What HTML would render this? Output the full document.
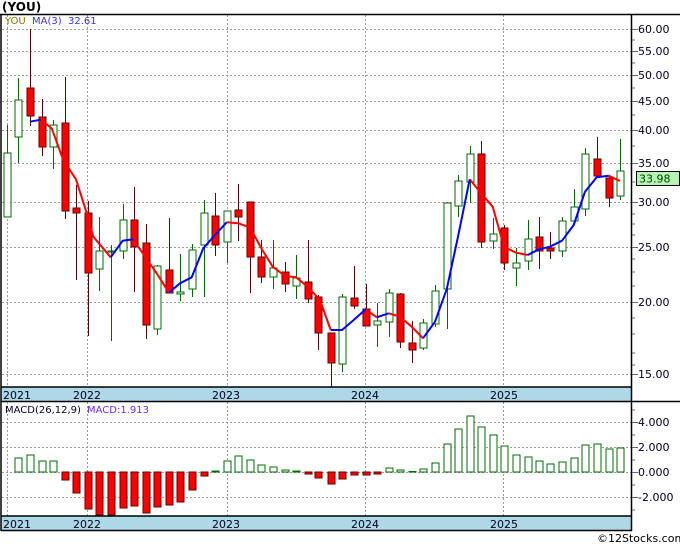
<!DOCTYPE html>
<html><head><meta charset="utf-8"><style>
html,body{margin:0;padding:0;background:#fff;width:680px;height:546px;overflow:hidden}
svg{display:block}
text{font-family:"DejaVu Sans","Liberation Sans",sans-serif;font-size:11px;fill:#000022}
</style></head><body>
<svg width="680" height="546" viewBox="0 0 680 546" xmlns="http://www.w3.org/2000/svg">
<text x="2" y="11" style="font-weight:bold;font-size:12px;fill:#000">(YOU)</text>
<g stroke="#999" stroke-width="1" stroke-dasharray="2,2">
<line x1="2" y1="29.5" x2="632" y2="29.5"/><line x1="2" y1="51.5" x2="632" y2="51.5"/><line x1="2" y1="75.5" x2="632" y2="75.5"/><line x1="2" y1="101.5" x2="632" y2="101.5"/><line x1="2" y1="130.5" x2="632" y2="130.5"/><line x1="2" y1="163.5" x2="632" y2="163.5"/><line x1="2" y1="202.5" x2="632" y2="202.5"/><line x1="2" y1="247.5" x2="632" y2="247.5"/><line x1="2" y1="302.5" x2="632" y2="302.5"/><line x1="2" y1="374.5" x2="632" y2="374.5"/>
<line x1="2" y1="422.5" x2="632" y2="422.5"/><line x1="2" y1="447.5" x2="632" y2="447.5"/><line x1="2" y1="472.5" x2="632" y2="472.5"/><line x1="2" y1="497.5" x2="632" y2="497.5"/>
<line x1="7.5" y1="15" x2="7.5" y2="387"/><line x1="87.5" y1="15" x2="87.5" y2="387"/><line x1="227.5" y1="15" x2="227.5" y2="387"/><line x1="365.5" y1="15" x2="365.5" y2="387"/><line x1="503.5" y1="15" x2="503.5" y2="387"/>
<line x1="7.5" y1="402" x2="7.5" y2="516"/><line x1="87.5" y1="402" x2="87.5" y2="516"/><line x1="227.5" y1="402" x2="227.5" y2="516"/><line x1="365.5" y1="402" x2="365.5" y2="516"/><line x1="503.5" y1="402" x2="503.5" y2="516"/>
</g>
<text x="5" y="24" style="font-size:10px;fill:#808000">YOU</text>
<text x="32" y="24" style="font-size:10px;fill:#3333ff">MA(3)</text>
<text x="68" y="24" style="font-size:10px;fill:#3333ff">32.61</text>
<g stroke-width="1">
<g stroke="#006a00" fill="#fff">
<line x1="7.5" y1="125" x2="7.5" y2="217"/><rect x="4" y="153" width="7" height="64"/>
<line x1="18.5" y1="78" x2="18.5" y2="163"/><rect x="15" y="100" width="7" height="37"/>
<line x1="53.5" y1="120" x2="53.5" y2="169"/><rect x="50" y="125" width="7" height="22"/>
<line x1="99.5" y1="217" x2="99.5" y2="291"/><rect x="96" y="251" width="7" height="18"/>
<line x1="111.5" y1="245" x2="111.5" y2="341"/><rect x="108" y="251" width="7" height="1"/>
<line x1="123.5" y1="204" x2="123.5" y2="259"/><rect x="120" y="220" width="7" height="31"/>
<line x1="157.5" y1="265" x2="157.5" y2="335"/><rect x="154" y="266" width="7" height="63"/>
<line x1="180.5" y1="254" x2="180.5" y2="301"/><rect x="177" y="292" width="7" height="2"/>
<line x1="192.5" y1="244" x2="192.5" y2="297"/><rect x="189" y="250" width="7" height="39"/>
<line x1="204.5" y1="200" x2="204.5" y2="297"/><rect x="201" y="213" width="7" height="32"/>
<line x1="227.5" y1="211" x2="227.5" y2="263"/><rect x="224" y="211" width="7" height="31"/>
<line x1="273.5" y1="240" x2="273.5" y2="289"/><rect x="270" y="268" width="7" height="9"/>
<line x1="296.5" y1="255" x2="296.5" y2="299"/><rect x="293" y="278" width="7" height="8"/>
<line x1="342.5" y1="294" x2="342.5" y2="372"/><rect x="339" y="297" width="7" height="67"/>
<line x1="377.5" y1="303" x2="377.5" y2="347"/><rect x="374" y="321" width="7" height="4"/>
<line x1="389.5" y1="289" x2="389.5" y2="337"/><rect x="386" y="293" width="7" height="29"/>
<line x1="423.5" y1="319" x2="423.5" y2="350"/><rect x="420" y="323" width="7" height="25"/>
<line x1="435.5" y1="285" x2="435.5" y2="327"/><rect x="432" y="291" width="7" height="33"/>
<line x1="447.5" y1="203" x2="447.5" y2="329"/><rect x="444" y="203" width="7" height="86"/>
<line x1="458.5" y1="175" x2="458.5" y2="217"/><rect x="455" y="181" width="7" height="25"/>
<line x1="470.5" y1="146" x2="470.5" y2="203"/><rect x="467" y="154" width="7" height="28"/>
<line x1="493.5" y1="218" x2="493.5" y2="249"/><rect x="490" y="234" width="7" height="7"/>
<line x1="516.5" y1="248" x2="516.5" y2="286"/><rect x="513" y="263" width="7" height="5"/>
<line x1="528.5" y1="220" x2="528.5" y2="270"/><rect x="525" y="239" width="7" height="22"/>
<line x1="562.5" y1="217" x2="562.5" y2="257"/><rect x="559" y="221" width="7" height="30"/>
<line x1="574.5" y1="189" x2="574.5" y2="225"/><rect x="571" y="207" width="7" height="14"/>
<line x1="585.5" y1="148" x2="585.5" y2="216"/><rect x="582" y="154" width="7" height="55"/>
<line x1="620.5" y1="139" x2="620.5" y2="200"/><rect x="617" y="171" width="7" height="25"/>
</g>
<g stroke="#600000" fill="#ff0000">
<line x1="30.5" y1="29" x2="30.5" y2="126"/><rect x="27" y="88" width="7" height="28"/>
<line x1="42.5" y1="99" x2="42.5" y2="156"/><rect x="39" y="117" width="7" height="30"/>
<line x1="65.5" y1="77" x2="65.5" y2="219"/><rect x="62" y="123" width="7" height="88"/>
<line x1="76.5" y1="185" x2="76.5" y2="280"/><rect x="73" y="208" width="7" height="5"/>
<line x1="88.5" y1="201" x2="88.5" y2="336"/><rect x="85" y="213" width="7" height="60"/>
<line x1="134.5" y1="187" x2="134.5" y2="292"/><rect x="131" y="220" width="7" height="27"/>
<line x1="146.5" y1="224" x2="146.5" y2="339"/><rect x="143" y="243" width="7" height="82"/>
<line x1="169.5" y1="218" x2="169.5" y2="293"/><rect x="166" y="270" width="7" height="23"/>
<line x1="215.5" y1="193" x2="215.5" y2="256"/><rect x="212" y="216" width="7" height="29"/>
<line x1="238.5" y1="184" x2="238.5" y2="241"/><rect x="235" y="210" width="7" height="7"/>
<line x1="250.5" y1="202" x2="250.5" y2="293"/><rect x="247" y="202" width="7" height="55"/>
<line x1="261.5" y1="240" x2="261.5" y2="283"/><rect x="258" y="257" width="7" height="20"/>
<line x1="285.5" y1="262" x2="285.5" y2="292"/><rect x="282" y="272" width="7" height="12"/>
<line x1="308.5" y1="240" x2="308.5" y2="303"/><rect x="305" y="282" width="7" height="17"/>
<line x1="318.5" y1="295" x2="318.5" y2="350"/><rect x="315" y="297" width="7" height="36"/>
<line x1="331.5" y1="333" x2="331.5" y2="387"/><rect x="328" y="333" width="7" height="30"/>
<line x1="354.5" y1="266" x2="354.5" y2="309"/><rect x="351" y="298" width="7" height="8"/>
<line x1="366.5" y1="284" x2="366.5" y2="326"/><rect x="363" y="309" width="7" height="17"/>
<line x1="400.5" y1="293" x2="400.5" y2="348"/><rect x="397" y="294" width="7" height="48"/>
<line x1="412.5" y1="321" x2="412.5" y2="363"/><rect x="409" y="343" width="7" height="7"/>
<line x1="481.5" y1="141" x2="481.5" y2="248"/><rect x="478" y="154" width="7" height="88"/>
<line x1="504.5" y1="225" x2="504.5" y2="270"/><rect x="501" y="228" width="7" height="35"/>
<line x1="539.5" y1="217" x2="539.5" y2="269"/><rect x="536" y="237" width="7" height="14"/>
<line x1="550.5" y1="232" x2="550.5" y2="259"/><rect x="547" y="248" width="7" height="3"/>
<line x1="597.5" y1="137" x2="597.5" y2="176"/><rect x="594" y="159" width="7" height="17"/>
<line x1="609.5" y1="177" x2="609.5" y2="207"/><rect x="606" y="178" width="7" height="20"/>
</g>
</g>
<g fill="none" stroke-width="2" stroke-linejoin="round">
<g stroke="#ff0000">
<polyline points="40.7,119.7 51.7,128.3 63.3,160 76,179.3 87.3,215 93.3,236.7 110.7,257.3"/>
<polyline points="133.3,239.3 145,256.7 156.7,273.3 169,292.7"/>
<polyline points="226.7,222.3 238.3,223.3 250,227.3 261.3,248.3 272.7,266.7 285,276 296,277.3 307.7,286.7 320,300 330.7,330"/>
<polyline points="365.7,309.3 376.7,317.3"/>
<polyline points="388.7,313.3 400,316.7 411.7,326.7 423,338.3"/>
<polyline points="469.7,179.3 480.7,192.7 492.7,206.7 504,246.7 516,252.7 527.7,255"/>
<polyline points="608.7,175.7 620,181"/>
</g>
<g stroke="#0000ff">
<polyline points="30,121.7 40.7,119.7"/>
<polyline points="110.7,257.3 122.7,240.7 133.3,239.3"/>
<polyline points="169,292.7 180,283.3 191.7,277.3 203.3,248.3 215,235 226.7,222.3"/>
<polyline points="330.7,330 342,330 353.7,320 365.7,309.3"/>
<polyline points="376.7,317.3 388.7,313.3"/>
<polyline points="423,338.3 435,321.7 446.7,289.3 458,236.7 469.7,179.3"/>
<polyline points="527.7,255 539,249.3 550,246.7 562,240.7 573.7,225 585,191.7 596.7,177.3 608.7,175.7"/>
</g>
</g>
<text x="5" y="413" style="font-size:10px">MACD(26,12,9)</text>
<text x="87" y="413" style="font-size:10px;fill:#6a2cff">MACD:1.913</text>
<g stroke="#006a00" fill="#fff">
<rect x="15" y="458" width="7" height="14"/><rect x="27" y="455" width="7" height="17"/><rect x="39" y="461" width="7" height="11"/><rect x="50" y="461" width="7" height="11"/>
<rect x="212" y="471" width="7" height="1"/><rect x="224" y="461" width="7" height="11"/><rect x="235" y="456" width="7" height="16"/><rect x="247" y="460" width="7" height="12"/><rect x="258" y="465" width="7" height="7"/><rect x="270" y="467" width="7" height="5"/><rect x="282" y="470" width="7" height="2"/><rect x="293" y="471" width="7" height="1"/>
<rect x="386" y="468" width="7" height="4"/><rect x="397" y="470" width="7" height="2"/><rect x="409" y="471.5" width="7" height="0.5"/><rect x="420" y="469" width="7" height="3"/><rect x="432" y="463" width="7" height="9"/><rect x="444" y="444" width="7" height="28"/><rect x="455" y="429" width="7" height="43"/><rect x="467" y="416" width="7" height="56"/><rect x="478" y="427" width="7" height="45"/><rect x="490" y="435" width="7" height="37"/><rect x="501" y="446" width="7" height="26"/><rect x="513" y="455" width="7" height="17"/><rect x="525" y="457" width="7" height="15"/><rect x="536" y="461" width="7" height="11"/><rect x="547" y="464" width="7" height="8"/><rect x="559" y="462" width="7" height="10"/><rect x="571" y="458" width="7" height="14"/><rect x="582" y="445" width="7" height="27"/><rect x="594" y="444" width="7" height="28"/><rect x="606" y="449" width="7" height="23"/><rect x="617" y="448" width="7" height="24"/>
</g>
<g stroke="#600000" fill="#ff0000">
<rect x="62" y="472" width="7" height="8"/><rect x="73" y="472" width="7" height="21"/><rect x="85" y="472" width="7" height="37"/><rect x="96" y="472" width="7" height="43"/><rect x="108" y="472" width="7" height="43"/><rect x="120" y="472" width="7" height="36"/><rect x="131" y="472" width="7" height="34"/><rect x="143" y="472" width="7" height="41"/><rect x="154" y="472" width="7" height="35"/><rect x="166" y="472" width="7" height="33"/><rect x="177" y="472" width="7" height="30"/><rect x="189" y="472" width="7" height="18"/><rect x="201" y="472" width="7" height="4"/>
<rect x="305" y="472" width="7" height="2"/><rect x="315" y="472" width="7" height="6"/><rect x="328" y="472" width="7" height="12"/><rect x="339" y="472" width="7" height="7"/><rect x="351" y="472" width="7" height="3"/><rect x="363" y="472" width="7" height="3"/><rect x="374" y="472" width="7" height="2"/>
</g>
<rect x="1" y="387" width="631" height="14" fill="#add8e6"/>
<rect x="1" y="516" width="631" height="14" fill="#add8e6"/>
<g>
<text x="3" y="399">2021</text><text x="73" y="399">2022</text><text x="212" y="399">2023</text><text x="351" y="399">2024</text><text x="490" y="399">2025</text>
<text x="3" y="528">2021</text><text x="73" y="528">2022</text><text x="212" y="528">2023</text><text x="351" y="528">2024</text><text x="490" y="528">2025</text>
</g>
<g stroke="#000" stroke-width="1.5" fill="none">
<line x1="0" y1="14.5" x2="680" y2="14.5"/>
<line x1="1" y1="14" x2="1" y2="531"/>
<line x1="631.5" y1="14" x2="631.5" y2="531"/>
<line x1="1" y1="387" x2="632" y2="387"/>
<line x1="1" y1="401.5" x2="680" y2="401.5"/>
<line x1="1" y1="516" x2="632" y2="516"/>
<line x1="1" y1="530.5" x2="632" y2="530.5"/>
</g>
<g stroke="#666" stroke-width="1">
<line x1="632" y1="29.5" x2="638" y2="29.5"/><line x1="632" y1="51.5" x2="638" y2="51.5"/><line x1="632" y1="75.5" x2="638" y2="75.5"/><line x1="632" y1="101.5" x2="638" y2="101.5"/><line x1="632" y1="130.5" x2="638" y2="130.5"/><line x1="632" y1="163.5" x2="638" y2="163.5"/><line x1="632" y1="202.5" x2="638" y2="202.5"/><line x1="632" y1="247.5" x2="638" y2="247.5"/><line x1="632" y1="302.5" x2="638" y2="302.5"/><line x1="632" y1="374.5" x2="638" y2="374.5"/>
<line x1="632" y1="40" x2="635" y2="40"/><line x1="632" y1="63" x2="635" y2="63"/><line x1="632" y1="88" x2="635" y2="88"/><line x1="632" y1="115" x2="635" y2="115"/><line x1="632" y1="146" x2="635" y2="146"/><line x1="632" y1="182" x2="635" y2="182"/><line x1="632" y1="214" x2="635" y2="214"/><line x1="632" y1="224" x2="635" y2="224"/><line x1="632" y1="235" x2="635" y2="235"/><line x1="632" y1="259" x2="635" y2="259"/><line x1="632" y1="272" x2="635" y2="272"/><line x1="632" y1="286" x2="635" y2="286"/><line x1="632" y1="318" x2="635" y2="318"/><line x1="632" y1="334" x2="635" y2="334"/><line x1="632" y1="353" x2="635" y2="353"/><line x1="632" y1="365" x2="635" y2="365"/>
<line x1="632" y1="422.5" x2="638" y2="422.5"/><line x1="632" y1="447.5" x2="638" y2="447.5"/><line x1="632" y1="472.5" x2="638" y2="472.5"/><line x1="632" y1="497.5" x2="638" y2="497.5"/>
<line x1="632" y1="410" x2="635" y2="410"/><line x1="632" y1="435" x2="635" y2="435"/><line x1="632" y1="460" x2="635" y2="460"/><line x1="632" y1="485" x2="635" y2="485"/><line x1="632" y1="510" x2="635" y2="510"/>
</g>
<g>
<text x="638" y="33">60.00</text><text x="638" y="55">55.00</text><text x="638" y="79">50.00</text><text x="638" y="105">45.00</text><text x="638" y="134">40.00</text><text x="638" y="167">35.00</text><text x="638" y="206">30.00</text><text x="638" y="251">25.00</text><text x="638" y="306">20.00</text><text x="638" y="378">15.00</text>
<text x="638" y="426">4.000</text><text x="638" y="451">2.000</text><text x="638" y="476">0.000</text><text x="638" y="501">-2.000</text>
</g>
<rect x="636.5" y="171.5" width="43" height="14" fill="#b4f5b4" stroke="#000"/>
<text x="639" y="182.5" style="fill:#004000">33.98</text>
<text x="597" y="542" style="font-size:11px;fill:#000">©12Stocks.com</text>
</svg>
</body></html>
